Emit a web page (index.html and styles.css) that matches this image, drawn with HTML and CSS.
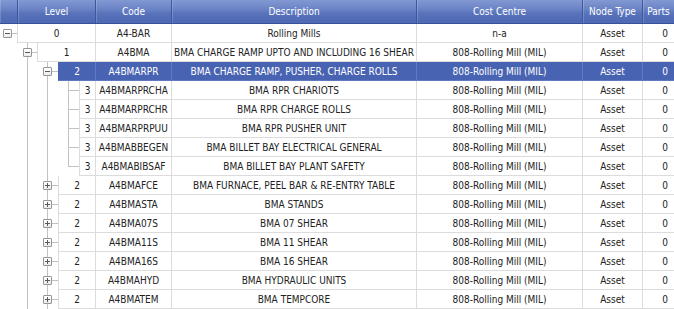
FILE: index.html
```html
<!DOCTYPE html>
<html>
<head>
<meta charset="utf-8">
<link rel="stylesheet" href="styles.css">
</head>
<body>
<div class="grid">
  <div class="hdr">
    <div class="h h-tree"></div>
    <div class="h h-level">Level</div>
    <div class="h c-code">Code</div>
    <div class="h c-desc">Description</div>
    <div class="h c-cost">Cost Centre</div>
    <div class="h c-type">Node Type</div>
    <div class="h c-parts">Parts</div>
  </div>

  <div class="row">
    <div class="tree">
      <span class="ind i0 hz"><span class="btn minus"></span></span>
      <span class="cell lvl">0</span>
    </div>
    <div class="cell c-code">A4-BAR</div>
    <div class="cell c-desc">Rolling Mills</div>
    <div class="cell c-cost">n-a</div>
    <div class="cell c-type">Asset</div>
    <div class="cell c-parts">0</div>
  </div>

  <div class="row">
    <div class="tree">
      <span class="ind i0"></span>
      <span class="ind i1 v hz"><span class="btn minus"></span></span>
      <span class="cell lvl">1</span>
    </div>
    <div class="cell c-code">A4BMA</div>
    <div class="cell c-desc">BMA CHARGE RAMP UPTO AND INCLUDING 16 SHEAR</div>
    <div class="cell c-cost">808-Rolling Mill (MIL)</div>
    <div class="cell c-type">Asset</div>
    <div class="cell c-parts">0</div>
  </div>

  <div class="row sel">
    <div class="tree">
      <span class="ind i0"></span>
      <span class="ind i1 v"></span>
      <span class="ind i2 v hz"><span class="btn minus"></span></span>
      <span class="cell lvl">2</span>
    </div>
    <div class="cell c-code">A4BMARPR</div>
    <div class="cell c-desc">BMA CHARGE RAMP, PUSHER, CHARGE ROLLS</div>
    <div class="cell c-cost">808-Rolling Mill (MIL)</div>
    <div class="cell c-type">Asset</div>
    <div class="cell c-parts">0</div>
  </div>

  <div class="row">
    <div class="tree">
      <span class="ind i0"></span>
      <span class="ind i1 v"></span>
      <span class="ind i2 v"></span>
      <span class="ind i3 v hz"></span>
      <span class="cell lvl">3</span>
    </div>
    <div class="cell c-code">A4BMARPRCHA</div>
    <div class="cell c-desc">BMA RPR CHARIOTS</div>
    <div class="cell c-cost">808-Rolling Mill (MIL)</div>
    <div class="cell c-type">Asset</div>
    <div class="cell c-parts">0</div>
  </div>

  <div class="row">
    <div class="tree">
      <span class="ind i0"></span>
      <span class="ind i1 v"></span>
      <span class="ind i2 v"></span>
      <span class="ind i3 v hz"></span>
      <span class="cell lvl">3</span>
    </div>
    <div class="cell c-code">A4BMARPRCHR</div>
    <div class="cell c-desc">BMA RPR CHARGE ROLLS</div>
    <div class="cell c-cost">808-Rolling Mill (MIL)</div>
    <div class="cell c-type">Asset</div>
    <div class="cell c-parts">0</div>
  </div>

  <div class="row">
    <div class="tree">
      <span class="ind i0"></span>
      <span class="ind i1 v"></span>
      <span class="ind i2 v"></span>
      <span class="ind i3 v hz"></span>
      <span class="cell lvl">3</span>
    </div>
    <div class="cell c-code">A4BMARPRPUU</div>
    <div class="cell c-desc">BMA RPR PUSHER UNIT</div>
    <div class="cell c-cost">808-Rolling Mill (MIL)</div>
    <div class="cell c-type">Asset</div>
    <div class="cell c-parts">0</div>
  </div>

  <div class="row">
    <div class="tree">
      <span class="ind i0"></span>
      <span class="ind i1 v"></span>
      <span class="ind i2 v"></span>
      <span class="ind i3 v hz"></span>
      <span class="cell lvl">3</span>
    </div>
    <div class="cell c-code">A4BMABBEGEN</div>
    <div class="cell c-desc">BMA BILLET BAY ELECTRICAL GENERAL</div>
    <div class="cell c-cost">808-Rolling Mill (MIL)</div>
    <div class="cell c-type">Asset</div>
    <div class="cell c-parts">0</div>
  </div>

  <div class="row">
    <div class="tree">
      <span class="ind i0"></span>
      <span class="ind i1 v"></span>
      <span class="ind i2 v"></span>
      <span class="ind i3 vt hz"></span>
      <span class="cell lvl">3</span>
    </div>
    <div class="cell c-code">A4BMABIBSAF</div>
    <div class="cell c-desc">BMA BILLET BAY PLANT SAFETY</div>
    <div class="cell c-cost">808-Rolling Mill (MIL)</div>
    <div class="cell c-type">Asset</div>
    <div class="cell c-parts">0</div>
  </div>

  <div class="row">
    <div class="tree">
      <span class="ind i0"></span>
      <span class="ind i1 v"></span>
      <span class="ind i2 v hz"><span class="btn plus"></span></span>
      <span class="cell lvl">2</span>
    </div>
    <div class="cell c-code">A4BMAFCE</div>
    <div class="cell c-desc">BMA FURNACE, PEEL BAR &amp; RE-ENTRY TABLE</div>
    <div class="cell c-cost">808-Rolling Mill (MIL)</div>
    <div class="cell c-type">Asset</div>
    <div class="cell c-parts">0</div>
  </div>

  <div class="row">
    <div class="tree">
      <span class="ind i0"></span>
      <span class="ind i1 v"></span>
      <span class="ind i2 v hz"><span class="btn plus"></span></span>
      <span class="cell lvl">2</span>
    </div>
    <div class="cell c-code">A4BMASTA</div>
    <div class="cell c-desc">BMA STANDS</div>
    <div class="cell c-cost">808-Rolling Mill (MIL)</div>
    <div class="cell c-type">Asset</div>
    <div class="cell c-parts">0</div>
  </div>

  <div class="row">
    <div class="tree">
      <span class="ind i0"></span>
      <span class="ind i1 v"></span>
      <span class="ind i2 v hz"><span class="btn plus"></span></span>
      <span class="cell lvl">2</span>
    </div>
    <div class="cell c-code">A4BMA07S</div>
    <div class="cell c-desc">BMA 07 SHEAR</div>
    <div class="cell c-cost">808-Rolling Mill (MIL)</div>
    <div class="cell c-type">Asset</div>
    <div class="cell c-parts">0</div>
  </div>

  <div class="row">
    <div class="tree">
      <span class="ind i0"></span>
      <span class="ind i1 v"></span>
      <span class="ind i2 v hz"><span class="btn plus"></span></span>
      <span class="cell lvl">2</span>
    </div>
    <div class="cell c-code">A4BMA11S</div>
    <div class="cell c-desc">BMA 11 SHEAR</div>
    <div class="cell c-cost">808-Rolling Mill (MIL)</div>
    <div class="cell c-type">Asset</div>
    <div class="cell c-parts">0</div>
  </div>

  <div class="row">
    <div class="tree">
      <span class="ind i0"></span>
      <span class="ind i1 v"></span>
      <span class="ind i2 v hz"><span class="btn plus"></span></span>
      <span class="cell lvl">2</span>
    </div>
    <div class="cell c-code">A4BMA16S</div>
    <div class="cell c-desc">BMA 16 SHEAR</div>
    <div class="cell c-cost">808-Rolling Mill (MIL)</div>
    <div class="cell c-type">Asset</div>
    <div class="cell c-parts">0</div>
  </div>

  <div class="row">
    <div class="tree">
      <span class="ind i0"></span>
      <span class="ind i1 v"></span>
      <span class="ind i2 v hz"><span class="btn plus"></span></span>
      <span class="cell lvl">2</span>
    </div>
    <div class="cell c-code">A4BMAHYD</div>
    <div class="cell c-desc">BMA HYDRAULIC UNITS</div>
    <div class="cell c-cost">808-Rolling Mill (MIL)</div>
    <div class="cell c-type">Asset</div>
    <div class="cell c-parts">0</div>
  </div>

  <div class="row">
    <div class="tree">
      <span class="ind i0"></span>
      <span class="ind i1 v"></span>
      <span class="ind i2 v hz"><span class="btn plus"></span></span>
      <span class="cell lvl">2</span>
    </div>
    <div class="cell c-code">A4BMATEM</div>
    <div class="cell c-desc">BMA TEMPCORE</div>
    <div class="cell c-cost">808-Rolling Mill (MIL)</div>
    <div class="cell c-type">Asset</div>
    <div class="cell c-parts">0</div>
  </div>
</div>
</body>
</html>
```

FILE: styles.css
```css
html, body {
  margin: 0;
  padding: 0;
  background: #ffffff;
}

body {
  font-family: "DejaVu Sans Condensed", "DejaVu Sans", sans-serif;
  font-stretch: condensed;
  font-size: 10px;
  color: #222222;
  overflow: hidden;
}

.grid {
  width: 680px;
}

/* header */
.hdr {
  display: flex;
  height: 24px;
  background: linear-gradient(to bottom, #8399d3 0%, #6a83c5 40%, #5872ba 60%, #4e69b3 100%);
  border-bottom: 1px solid #3a5098;
  box-sizing: border-box;
}

.h {
  box-sizing: border-box;
  height: 23px;
  display: flex;
  align-items: center;
  justify-content: center;
  color: #ffffff;
  border-right: 1px solid #3f569f;
  box-shadow: inset 1px 0 0 rgba(255, 255, 255, 0.18);
  white-space: nowrap;
  flex: none;
}

.h-tree { width: 18px; }
.h-level { width: 78px; }

/* body rows */
.row {
  display: flex;
  height: 19px;
}

.tree {
  display: flex;
  width: 96px;
  flex: none;
}

.cell {
  box-sizing: border-box;
  height: 19px;
  display: flex;
  align-items: center;
  justify-content: center;
  border-right: 1px solid #dcdcdc;
  border-bottom: 1px solid #dcdcdc;
  white-space: nowrap;
  overflow: hidden;
  flex: none;
}

.lvl {
  flex: 1;
  border-left: 1px solid #dcdcdc;
}

.c-code { width: 76px; }
.c-desc { width: 245px; }
.c-cost { width: 166px; }
.c-type { width: 60px; }
.c-parts { width: 32px; }

.cell.c-parts {
  justify-content: flex-end;
  padding-right: 6px;
}

/* tree indents */
.ind {
  flex: none;
  height: 19px;
  display: flex;
  align-items: center;
  --lx: 10px;
  --ln: #c2c2c2;
}

.i0 { width: 17px; --lx: 7px; }
.i1 { width: 20px; }
.i2 { width: 21px; }
.i3 { width: 21px; }

.ind.v {
  background: linear-gradient(var(--ln), var(--ln)) no-repeat var(--lx) 0 / 1px 100%;
}

.ind.hz {
  background: linear-gradient(var(--ln), var(--ln)) no-repeat right 9px / calc(100% - var(--lx)) 1px;
}

.ind.v.hz {
  background:
    linear-gradient(var(--ln), var(--ln)) no-repeat var(--lx) 0 / 1px 100%,
    linear-gradient(var(--ln), var(--ln)) no-repeat right 9px / calc(100% - var(--lx)) 1px;
}

.ind.vt.hz {
  background:
    linear-gradient(var(--ln), var(--ln)) no-repeat var(--lx) 0 / 1px 10px,
    linear-gradient(var(--ln), var(--ln)) no-repeat right 9px / calc(100% - var(--lx)) 1px;
}

.btn {
  box-sizing: border-box;
  width: 9px;
  height: 9px;
  margin-left: calc(var(--lx) - 4px);
  border: 1px solid #969696;
  border-radius: 1px;
  background-color: #ffffff;
}

.btn.minus {
  background:
    linear-gradient(#5a5a5a, #5a5a5a) no-repeat center / 5px 1px,
    linear-gradient(#ffffff, #ececec);
}

.btn.plus {
  background:
    linear-gradient(#5a5a5a, #5a5a5a) no-repeat center / 5px 1px,
    linear-gradient(#5a5a5a, #5a5a5a) no-repeat center / 1px 5px,
    linear-gradient(#ffffff, #ececec);
}

/* selected row */
.row.sel .cell {
  background: #4863b2;
  color: #ffffff;
  border-color: #6179bf;
}

.row.sel .lvl {
  border-left-color: #4863b2;
}
```
